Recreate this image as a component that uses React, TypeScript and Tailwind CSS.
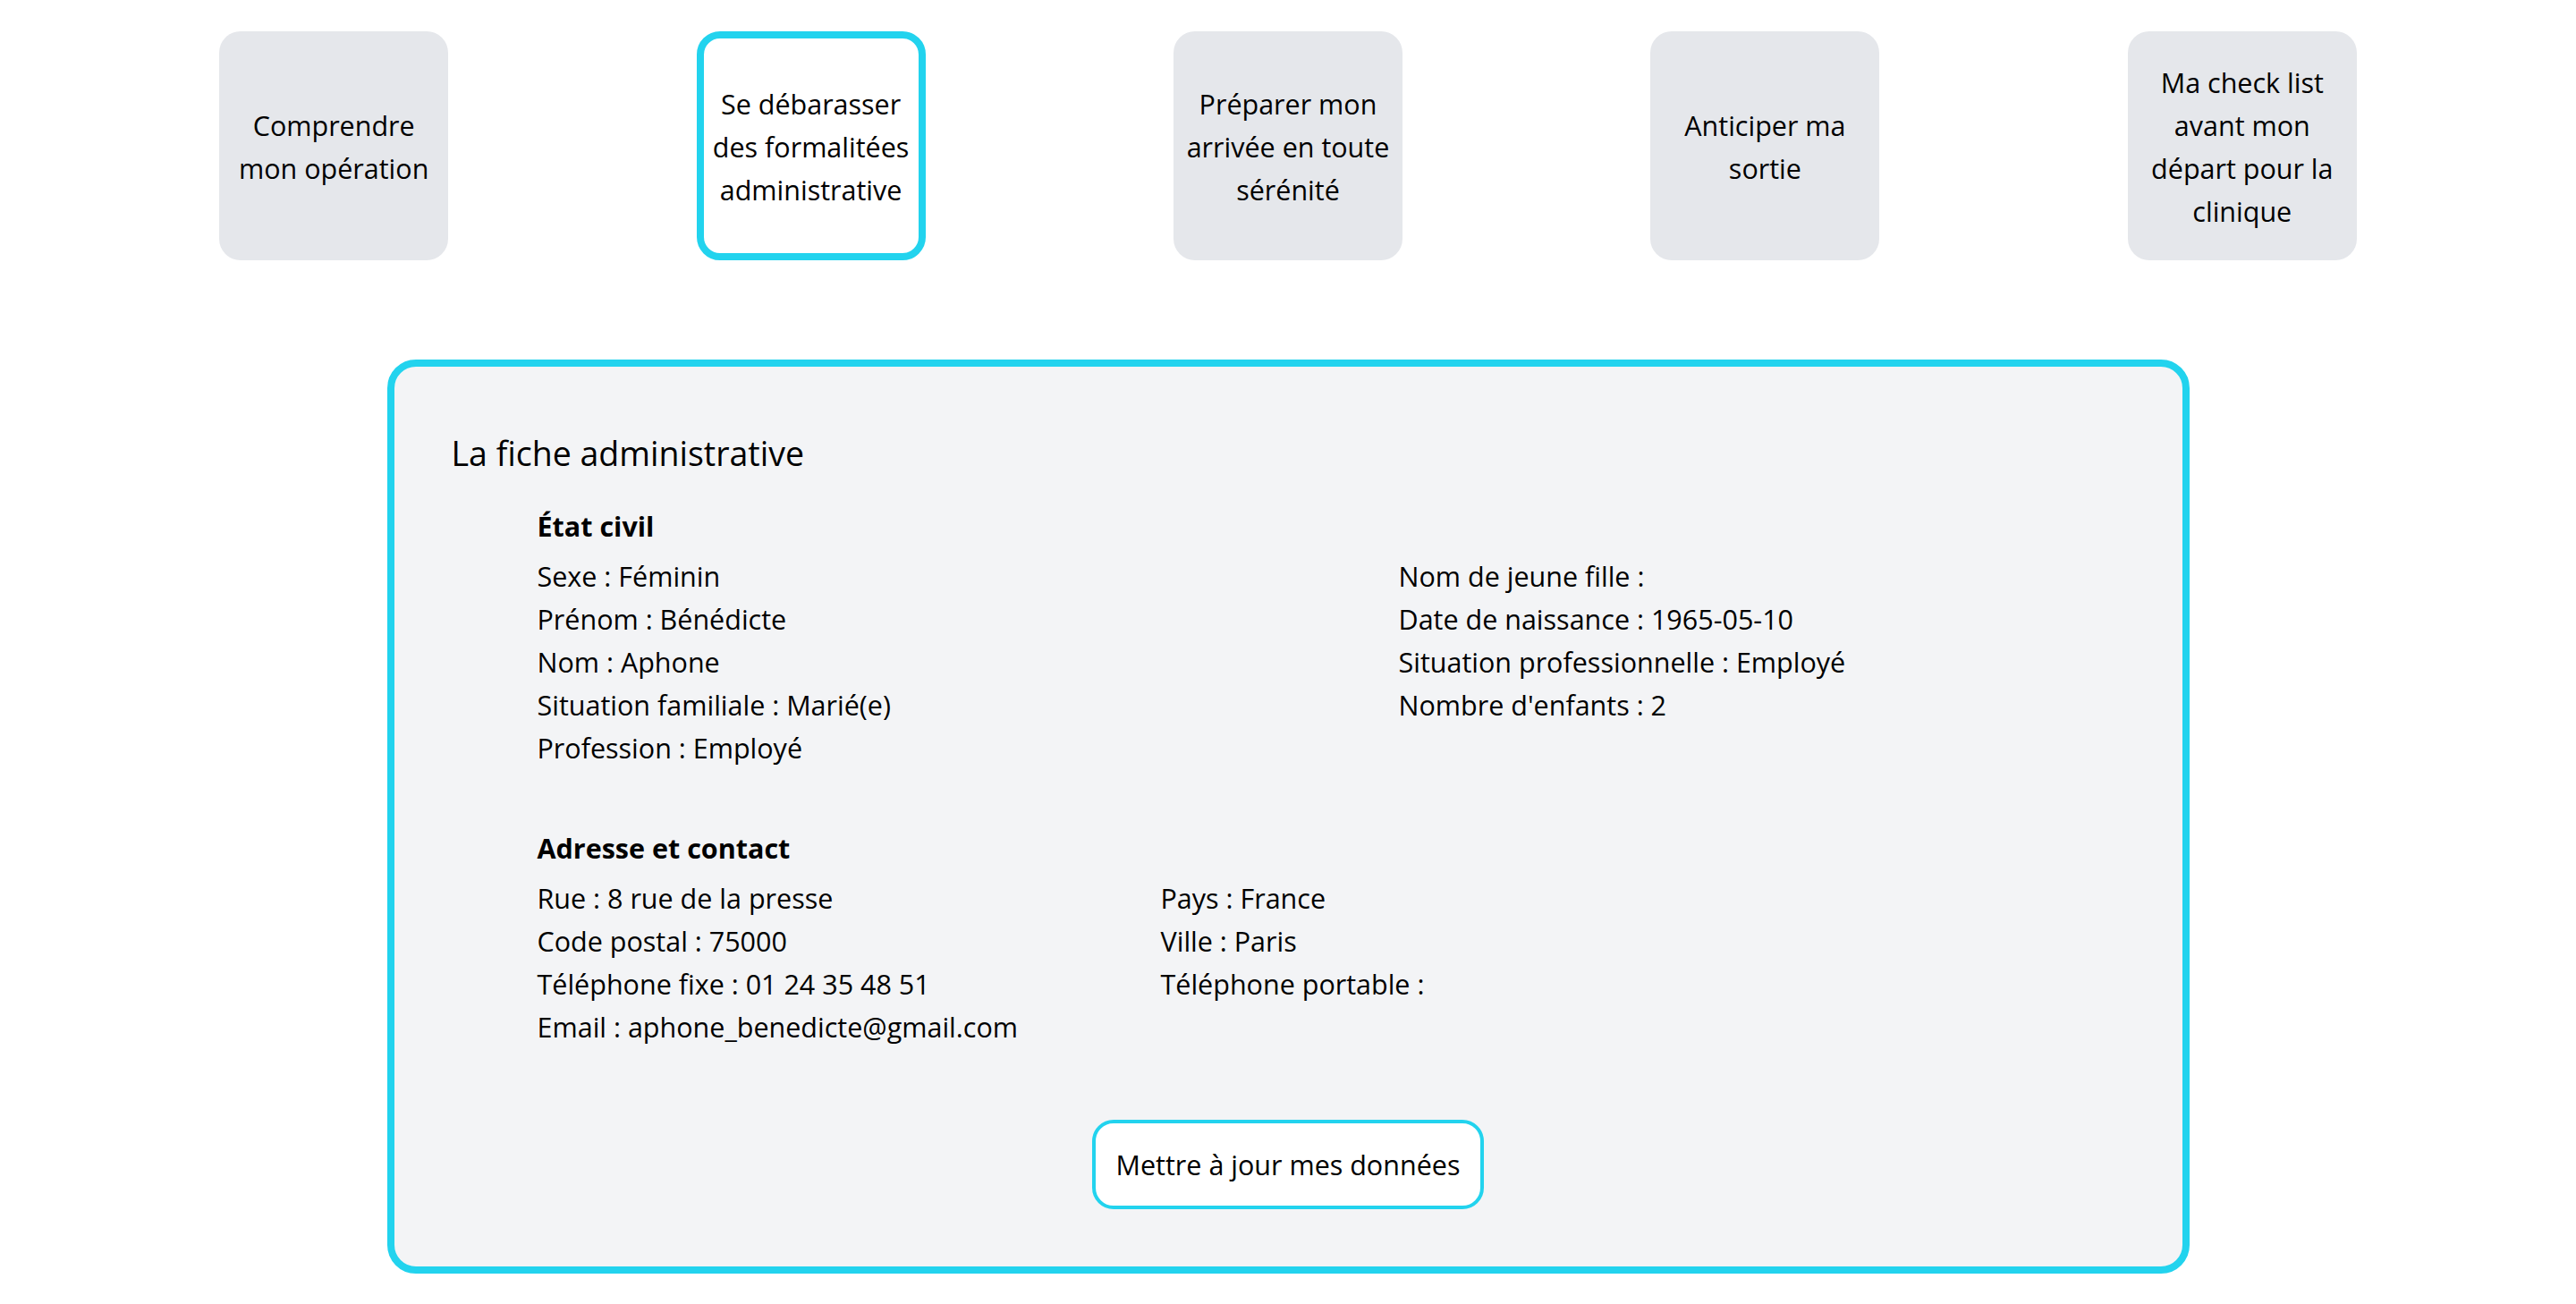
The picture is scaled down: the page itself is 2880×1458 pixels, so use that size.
import React from 'react';

const steps = [
  { lines: ['Comprendre', 'mon opération'], active: false },
  { lines: ['Se débarasser', 'des formalitées', 'administrative'], active: true },
  { lines: ['Préparer mon', 'arrivée en toute', 'sérénité'], active: false },
  { lines: ['Anticiper ma', 'sortie'], active: false },
  { lines: ['Ma check list', 'avant mon', 'départ pour la', 'clinique'], active: false },
];

const etatCivilLeft = [
  'Sexe : Féminin',
  'Prénom : Bénédicte',
  'Nom : Aphone',
  'Situation familiale : Marié(e)',
  'Profession : Employé',
];

const etatCivilRight = [
  'Nom de jeune fille :',
  'Date de naissance : 1965-05-10',
  'Situation professionnelle : Employé',
  "Nombre d'enfants : 2",
];

const adresseLeft = [
  'Rue : 8 rue de la presse',
  'Code postal : 75000',
  'Téléphone fixe : 01 24 35 48 51',
  'Email : aphone_benedicte@gmail.com',
];

const adresseRight = ['Pays : France', 'Ville : Paris', 'Téléphone portable :'];

function Column({ items }: { items: string[] }) {
  return (
    <div>
      {items.map(item => (
        <p key={item} className="leading-[48px] whitespace-nowrap">
          {item}
        </p>
      ))}
    </div>
  );
}

export default function App() {
  return (
    <div className="min-h-screen bg-white text-black text-[30.5px] font-['Open_Sans',sans-serif]">
      {/* step cards */}
      <div className="mx-auto w-[2667px] pt-[35px] grid grid-cols-5">
        {steps.map(step => (
          <div key={step.lines[0]} className="flex justify-center">
            <div
              className={
                step.active
                  ? 'h-[256px] w-[256px] rounded-[26px] border-[8px] border-[#22d3ee] bg-white flex items-center justify-center text-center pt-[2px]'
                  : 'h-[256px] w-[256px] rounded-[24px] bg-[#e5e7eb] flex items-center justify-center text-center pt-[2px]'
              }
            >
              <p className="leading-[48px] whitespace-nowrap">
                {step.lines.map((l, i) => (
                  <React.Fragment key={l}>
                    {i > 0 && <br />}
                    {l}
                  </React.Fragment>
                ))}
              </p>
            </div>
          </div>
        ))}
      </div>

      {/* fiche administrative */}
      <div className="mx-auto mt-[111px] w-[2015px] rounded-[32px] border-[8px] border-[#22d3ee] bg-[#f3f4f6] pt-[69px] pb-[64px] px-[64px]">
        <h2 className="text-[37.5px] leading-[56px]">La fiche administrative</h2>

        <div className="pl-[96px] mt-[29px]">
          <h3 className="font-bold leading-[48px] mb-[8px]">État civil</h3>
          <div className="grid grid-cols-[963px_1fr]">
            <Column items={etatCivilLeft} />
            <Column items={etatCivilRight} />
          </div>

          <h3 className="font-bold leading-[48px] mt-[64px] mb-[8px]">Adresse et contact</h3>
          <div className="grid grid-cols-[697px_1fr]">
            <Column items={adresseLeft} />
            <Column items={adresseRight} />
          </div>
        </div>

        <div className="flex justify-center mt-[80px]">
          <button className="rounded-[24px] border-[4px] border-[#22d3ee] bg-white px-[23px] py-[22px] leading-[48px]">
            Mettre à jour mes données
          </button>
        </div>
      </div>
    </div>
  );
}
